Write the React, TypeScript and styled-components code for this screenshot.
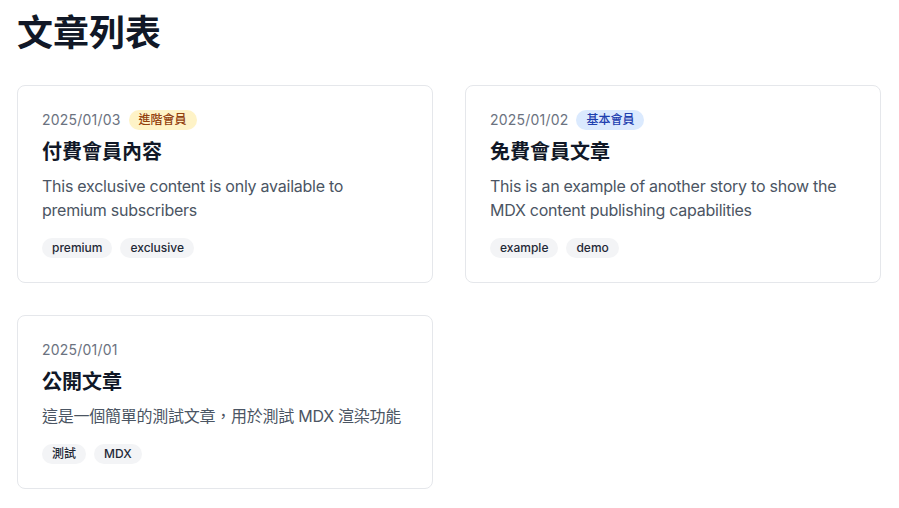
import React from "react";
import styled, { createGlobalStyle } from "styled-components";

const GlobalStyle = createGlobalStyle`
  * { box-sizing: border-box; }
  html, body { margin: 0; padding: 0; background: #ffffff; }
  body {
    font-family: "Inter", "Noto Sans CJK TC", sans-serif;
    color: #111827;
    -webkit-font-smoothing: antialiased;
  }
`;

const Container = styled.main`
  padding: 13px 18px 16px 17px;
`;

const PageTitle = styled.h1`
  margin: 0 0 32px;
  font-size: 36px;
  line-height: 40px;
  font-weight: 700;
  color: #111827;
`;

const Grid = styled.div`
  display: grid;
  grid-template-columns: repeat(2, 1fr);
  gap: 32px;
  align-items: start;
`;

const Card = styled.article`
  border: 1px solid #e5e7eb;
  border-radius: 8px;
  background: #ffffff;
  padding: 24px;
`;

const MetaRow = styled.div`
  display: flex;
  align-items: center;
  gap: 8px;
  height: 20px;
  margin-bottom: 8px;
`;

const DateText = styled.span`
  font-size: 14px;
  line-height: 20px;
  letter-spacing: 0.2px;
  color: #6b7280;
`;

const Badge = styled.span<{ $tone: "premium" | "basic" }>`
  display: inline-flex;
  align-items: center;
  height: 20px;
  padding: 0 10px;
  border-radius: 9999px;
  font-size: 12px;
  line-height: 16px;
  font-weight: 500;
  background: ${(p) => (p.$tone === "premium" ? "#fef3c7" : "#dbeafe")};
  color: ${(p) => (p.$tone === "premium" ? "#92400e" : "#1e40af")};
`;

const CardTitle = styled.h2`
  margin: 0 0 8px;
  font-size: 20px;
  line-height: 28px;
  font-weight: 700;
  color: #111827;
`;

const Description = styled.p`
  margin: 0 0 16px;
  font-size: 16px;
  line-height: 24px;
  letter-spacing: -0.25px;
  color: #4b5563;
`;

const TagList = styled.div`
  display: flex;
  flex-wrap: wrap;
  gap: 8px;
`;

const Tag = styled.span`
  display: inline-flex;
  align-items: center;
  height: 20px;
  padding: 0 10px;
  border-radius: 9999px;
  background: #f3f4f6;
  color: #1f2937;
  font-size: 12px;
  line-height: 16px;
  font-weight: 500;
`;

type Post = {
  date: string;
  badge?: { label: string; tone: "premium" | "basic" };
  title: string;
  description: string;
  tags: string[];
};

const posts: Post[] = [
  {
    date: "2025/01/03",
    badge: { label: "進階會員", tone: "premium" },
    title: "付費會員內容",
    description: "This exclusive content is only available to premium subscribers",
    tags: ["premium", "exclusive"],
  },
  {
    date: "2025/01/02",
    badge: { label: "基本會員", tone: "basic" },
    title: "免費會員文章",
    description: "This is an example of another story to show the MDX content publishing capabilities",
    tags: ["example", "demo"],
  },
  {
    date: "2025/01/01",
    title: "公開文章",
    description: "這是一個簡單的測試文章，用於測試 MDX 渲染功能",
    tags: ["測試", "MDX"],
  },
];

export default function App() {
  return (
    <>
      <GlobalStyle />
      <Container>
        <PageTitle>文章列表</PageTitle>
        <Grid>
          {posts.map((post) => (
            <Card key={post.date}>
              <MetaRow>
                <DateText>{post.date}</DateText>
                {post.badge && <Badge $tone={post.badge.tone}>{post.badge.label}</Badge>}
              </MetaRow>
              <CardTitle>{post.title}</CardTitle>
              <Description>{post.description}</Description>
              <TagList>
                {post.tags.map((t) => (
                  <Tag key={t}>{t}</Tag>
                ))}
              </TagList>
            </Card>
          ))}
        </Grid>
      </Container>
    </>
  );
}
